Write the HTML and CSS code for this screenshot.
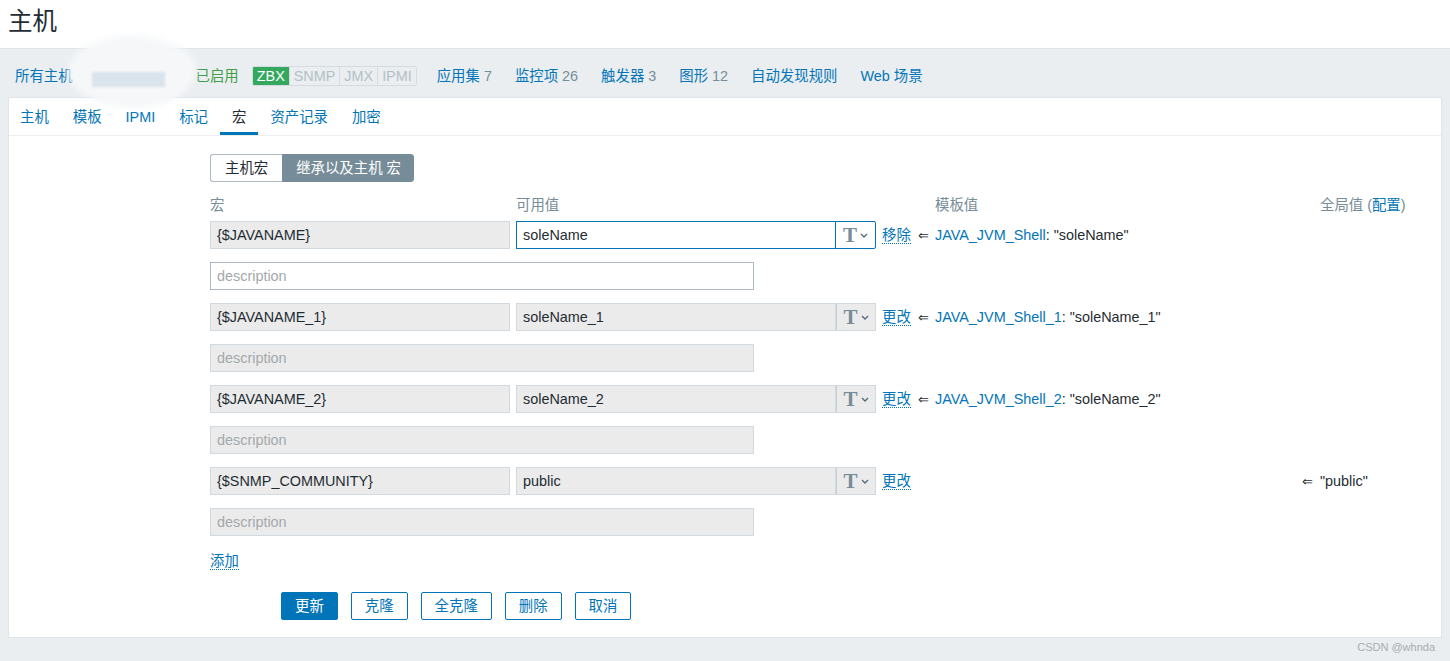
FILE: index.html
```html
<!DOCTYPE html>
<html lang="zh-CN">
<head>
<meta charset="utf-8">
<title>主机</title>
<link rel="stylesheet" href="styles.css">
</head>
<body>
<header class="page-header"><h1 class="page-title">主机</h1></header>

<nav class="host-nav">
  <a class="nav-link first" href="#">所有主机</a>
  <span class="host-name" aria-hidden="true"></span>
  <span class="status">已启用</span>
  <span class="badges">
    <span class="badge badge-on">ZBX</span><span class="badge">SNMP</span><span class="badge">JMX</span><span class="badge">IPMI</span>
  </span>
  <a class="nav-link" href="#">应用集 <span class="count">7</span></a>
  <a class="nav-link" href="#">监控项 <span class="count">26</span></a>
  <a class="nav-link" href="#">触发器 <span class="count">3</span></a>
  <a class="nav-link" href="#">图形 <span class="count">12</span></a>
  <a class="nav-link" href="#">自动发现规则</a>
  <a class="nav-link" href="#">Web 场景</a>
</nav>

<section class="panel">
  <ul class="tabs">
    <li class="tab"><a href="#">主机</a></li>
    <li class="tab"><a href="#">模板</a></li>
    <li class="tab"><a href="#">IPMI</a></li>
    <li class="tab"><a href="#">标记</a></li>
    <li class="tab is-active"><a href="#">宏</a></li>
    <li class="tab"><a href="#">资产记录</a></li>
    <li class="tab"><a href="#">加密</a></li>
  </ul>

  <div class="form-body">
    <div class="seg">
      <span class="seg-btn">主机宏</span><span class="seg-btn is-on">继承以及主机 宏</span>
    </div>

    <div class="macro-grid macro-head">
      <div>宏</div>
      <div>可用值</div>
      <div></div>
      <div></div>
      <div>模板值</div>
      <div></div>
      <div>全局值 (<a href="#">配置</a>)</div>
    </div>

    <div class="macro-grid macro-rows">
      <input class="field field-off" type="text" value="{$JAVANAME}" readonly>
      <div class="val is-focus">
        <input class="field val-input" type="text" value="soleName">
        <span class="type-btn"><span class="type-t">T</span><svg class="chev" width="8" height="5" viewBox="0 0 8 5"><path d="M1 1l3 3 3-3" fill="none" stroke="#4f6a78" stroke-width="1.3"/></svg></span>
      </div>
      <a class="action" href="#">移除</a>
      <span class="arrow">⇐</span>
      <span class="tpl"><a href="#">JAVA_JVM_Shell</a>: "soleName"</span>
      <span></span>
      <span></span>
      <input class="field desc" type="text" placeholder="description">

      <input class="field field-off" type="text" value="{$JAVANAME_1}" readonly>
      <div class="val">
        <input class="field val-input field-off" type="text" value="soleName_1" readonly>
        <span class="type-btn"><span class="type-t">T</span><svg class="chev" width="8" height="5" viewBox="0 0 8 5"><path d="M1 1l3 3 3-3" fill="none" stroke="#4f6a78" stroke-width="1.3"/></svg></span>
      </div>
      <a class="action" href="#">更改</a>
      <span class="arrow">⇐</span>
      <span class="tpl"><a href="#">JAVA_JVM_Shell_1</a>: "soleName_1"</span>
      <span></span>
      <span></span>
      <input class="field desc field-off" type="text" placeholder="description" readonly>

      <input class="field field-off" type="text" value="{$JAVANAME_2}" readonly>
      <div class="val">
        <input class="field val-input field-off" type="text" value="soleName_2" readonly>
        <span class="type-btn"><span class="type-t">T</span><svg class="chev" width="8" height="5" viewBox="0 0 8 5"><path d="M1 1l3 3 3-3" fill="none" stroke="#4f6a78" stroke-width="1.3"/></svg></span>
      </div>
      <a class="action" href="#">更改</a>
      <span class="arrow">⇐</span>
      <span class="tpl"><a href="#">JAVA_JVM_Shell_2</a>: "soleName_2"</span>
      <span></span>
      <span></span>
      <input class="field desc field-off" type="text" placeholder="description" readonly>

      <input class="field field-off" type="text" value="{$SNMP_COMMUNITY}" readonly>
      <div class="val">
        <input class="field val-input field-off" type="text" value="public" readonly>
        <span class="type-btn"><span class="type-t">T</span><svg class="chev" width="8" height="5" viewBox="0 0 8 5"><path d="M1 1l3 3 3-3" fill="none" stroke="#4f6a78" stroke-width="1.3"/></svg></span>
      </div>
      <a class="action" href="#">更改</a>
      <span></span>
      <span></span>
      <span class="arrow">⇐</span>
      <span class="tpl">"public"</span>
      <input class="field desc field-off" type="text" placeholder="description" readonly>
    </div>

    <a class="action add" href="#">添加</a>

    <div class="buttons">
      <button class="btn btn-primary" type="button">更新</button>
      <button class="btn" type="button">克隆</button>
      <button class="btn" type="button">全克隆</button>
      <button class="btn" type="button">删除</button>
      <button class="btn" type="button">取消</button>
    </div>
  </div>
</section>

<footer class="page-footer">CSDN @whnda</footer>
</body>
</html>
```

FILE: styles.css
```css
* { box-sizing: border-box; }

html, body { margin: 0; padding: 0; }

body {
  width: 1450px;
  height: 661px;
  overflow: hidden;
  background: #ebeef1;
  font-family: "Liberation Sans", Arial, "Noto Sans CJK SC", sans-serif;
  font-size: 14.4px;
  color: #1f2c33;
}

a { color: #0275b8; text-decoration: none; }

/* header */
.page-header {
  background: #fff;
  height: 49px;
  border-bottom: 1px solid #dfe4e7;
  padding: 0 8px;
  display: flex;
  align-items: center;
}
.page-title {
  margin: -4px 0 0 0;
  font-size: 24.5px;
  font-weight: normal;
  line-height: 30px;
  color: #1f2c33;
}

/* host nav */
.host-nav {
  height: 48px;
  display: flex;
  align-items: center;
  padding: 6px 0 0 15px;
  line-height: 16px;
  white-space: nowrap;
}
.nav-link { margin-right: 23px; }
.count { color: #768d99; }
.host-name {
  position: relative;
  display: inline-block;
  width: 76px;
  height: 20px;
  margin-right: 24px;
}
.host-name::before {
  content: "";
  position: absolute;
  z-index: 5;
  left: -28px;
  top: -30px;
  width: 128px;
  height: 72px;
  border-radius: 48% 52% 45% 55% / 50% 45% 55% 50%;
  background: #f5f7f9;
  filter: blur(3px);
}
.host-name::after {
  content: "";
  position: absolute;
  z-index: 6;
  left: -4px;
  top: 6px;
  width: 73px;
  height: 15px;
  background: #d9e4ec;
  filter: blur(1px);
}
.status { color: #429e47; margin-right: 13px; }
.badges {
  display: flex;
  height: 20px;
  border: 1px solid #d5dce0;
  border-radius: 2px;
  overflow: hidden;
  margin-right: 20px;
}
.badge {
  padding: 0 4px;
  line-height: 18px;
  color: #b3c0c6;
  border-left: 1px solid #d5dce0;
}
.badge-on {
  background: #34a85e;
  color: #fff;
  border-left: none;
}

/* panel */
.panel {
  margin: 0 8px;
  background: #fff;
  border: 1px solid #dfe4e7;
}
.tabs {
  display: flex;
  list-style: none;
  margin: 0;
  padding: 0;
  border-bottom: 1px solid #ebeef1;
}
.tab a {
  display: block;
  height: 37px;
  padding: 4px 12px 0 12px;
  line-height: 30px;
  border-bottom: 3px solid transparent;
}
.tab:first-child a { padding-left: 11px; }
.tab.is-active a {
  color: #1f2c33;
  border-bottom-color: #0275b8;
}

.form-body {
  padding: 18px 0 17px 201px;
}

.seg { display: flex; height: 28px; }
.seg-btn {
  display: block;
  height: 28px;
  line-height: 26px;
  padding: 0 14px;
  border: 1px solid #acbbc2;
  background: #fff;
  color: #1f2c33;
}
.seg-btn:first-child { border-radius: 3px 0 0 3px; border-right: none; }
.seg-btn.is-on {
  padding: 0 12px 0 13px;
  background: #768d99;
  border-color: #768d99;
  color: #fff;
  border-radius: 0 3px 3px 0;
}

.macro-grid {
  display: grid;
  grid-template-columns: 300px 360px 30px 11px 361px 12px 1fr;
  column-gap: 6px;
  align-items: center;
}
.macro-head {
  margin: 15px 0 8px;
  line-height: 16px;
  color: #768d99;
  white-space: nowrap;
}
.macro-rows { row-gap: 13px; }

.field {
  display: block;
  width: 100%;
  height: 28px;
  padding: 0 6px;
  border: 1px solid #acbbc2;
  background: #fff;
  font-family: "Liberation Sans", Arial, "Noto Sans CJK SC", sans-serif;
  font-size: 14.4px;
  color: #1f2c33;
  outline: none;
}
.field::placeholder { color: #a3a8ab; opacity: 1; }
.field-off {
  background: #ebebeb;
  border-color: #d3dadf;
}
.desc { grid-column: 1 / -1; justify-self: start; width: 544px; }

.val { display: flex; height: 28px; }
.val-input { flex: 1; width: auto; min-width: 0; }
.type-btn {
  flex: 0 0 40px;
  height: 28px;
  display: flex;
  align-items: center;
  justify-content: center;
  gap: 3px;
  background: #ebebeb;
  border: 1px solid #d3dadf;
  border-left-color: #c6cfd4;
}
.type-t {
  font-family: "Liberation Serif", "Times New Roman", serif;
  font-weight: bold;
  font-size: 21px;
  line-height: 20px;
  color: #768d99;
}
.chev { margin-top: 1px; }
.val.is-focus .val-input { border-color: #0275b8; }
.val.is-focus .type-btn {
  background: #fff;
  border-color: #0275b8;
  border-left: 1px solid #0275b8;
  border-radius: 0 2px 2px 0;
  margin-left: -1px;
  flex-basis: 41px;
}

.action {
  justify-self: start;
  line-height: 16px;
  border-bottom: 1px dotted #0275b8;
  white-space: nowrap;
}
.arrow {
  font-family: "DejaVu Sans", sans-serif;
  font-size: 13px;
  color: #1f2c33;
  white-space: nowrap;
}
.tpl { white-space: nowrap; }

.add {
  display: inline-block;
  margin-top: 17px;
}

.buttons {
  display: flex;
  gap: 13px;
  margin: 22px 0 0 71px;
}
.btn {
  height: 28px;
  padding: 0 13px;
  border: 1px solid #0275b8;
  border-radius: 2px;
  background: #fff;
  color: #0275b8;
  font-family: "Liberation Sans", Arial, "Noto Sans CJK SC", sans-serif;
  font-size: 14.4px;
  line-height: 26px;
}
.btn-primary {
  background: #0275b8;
  color: #fff;
}

.page-footer {
  text-align: right;
  padding: 1px 15px 0 0;
  font-size: 11px;
  line-height: 16px;
  color: #a7acb0;
}
```
